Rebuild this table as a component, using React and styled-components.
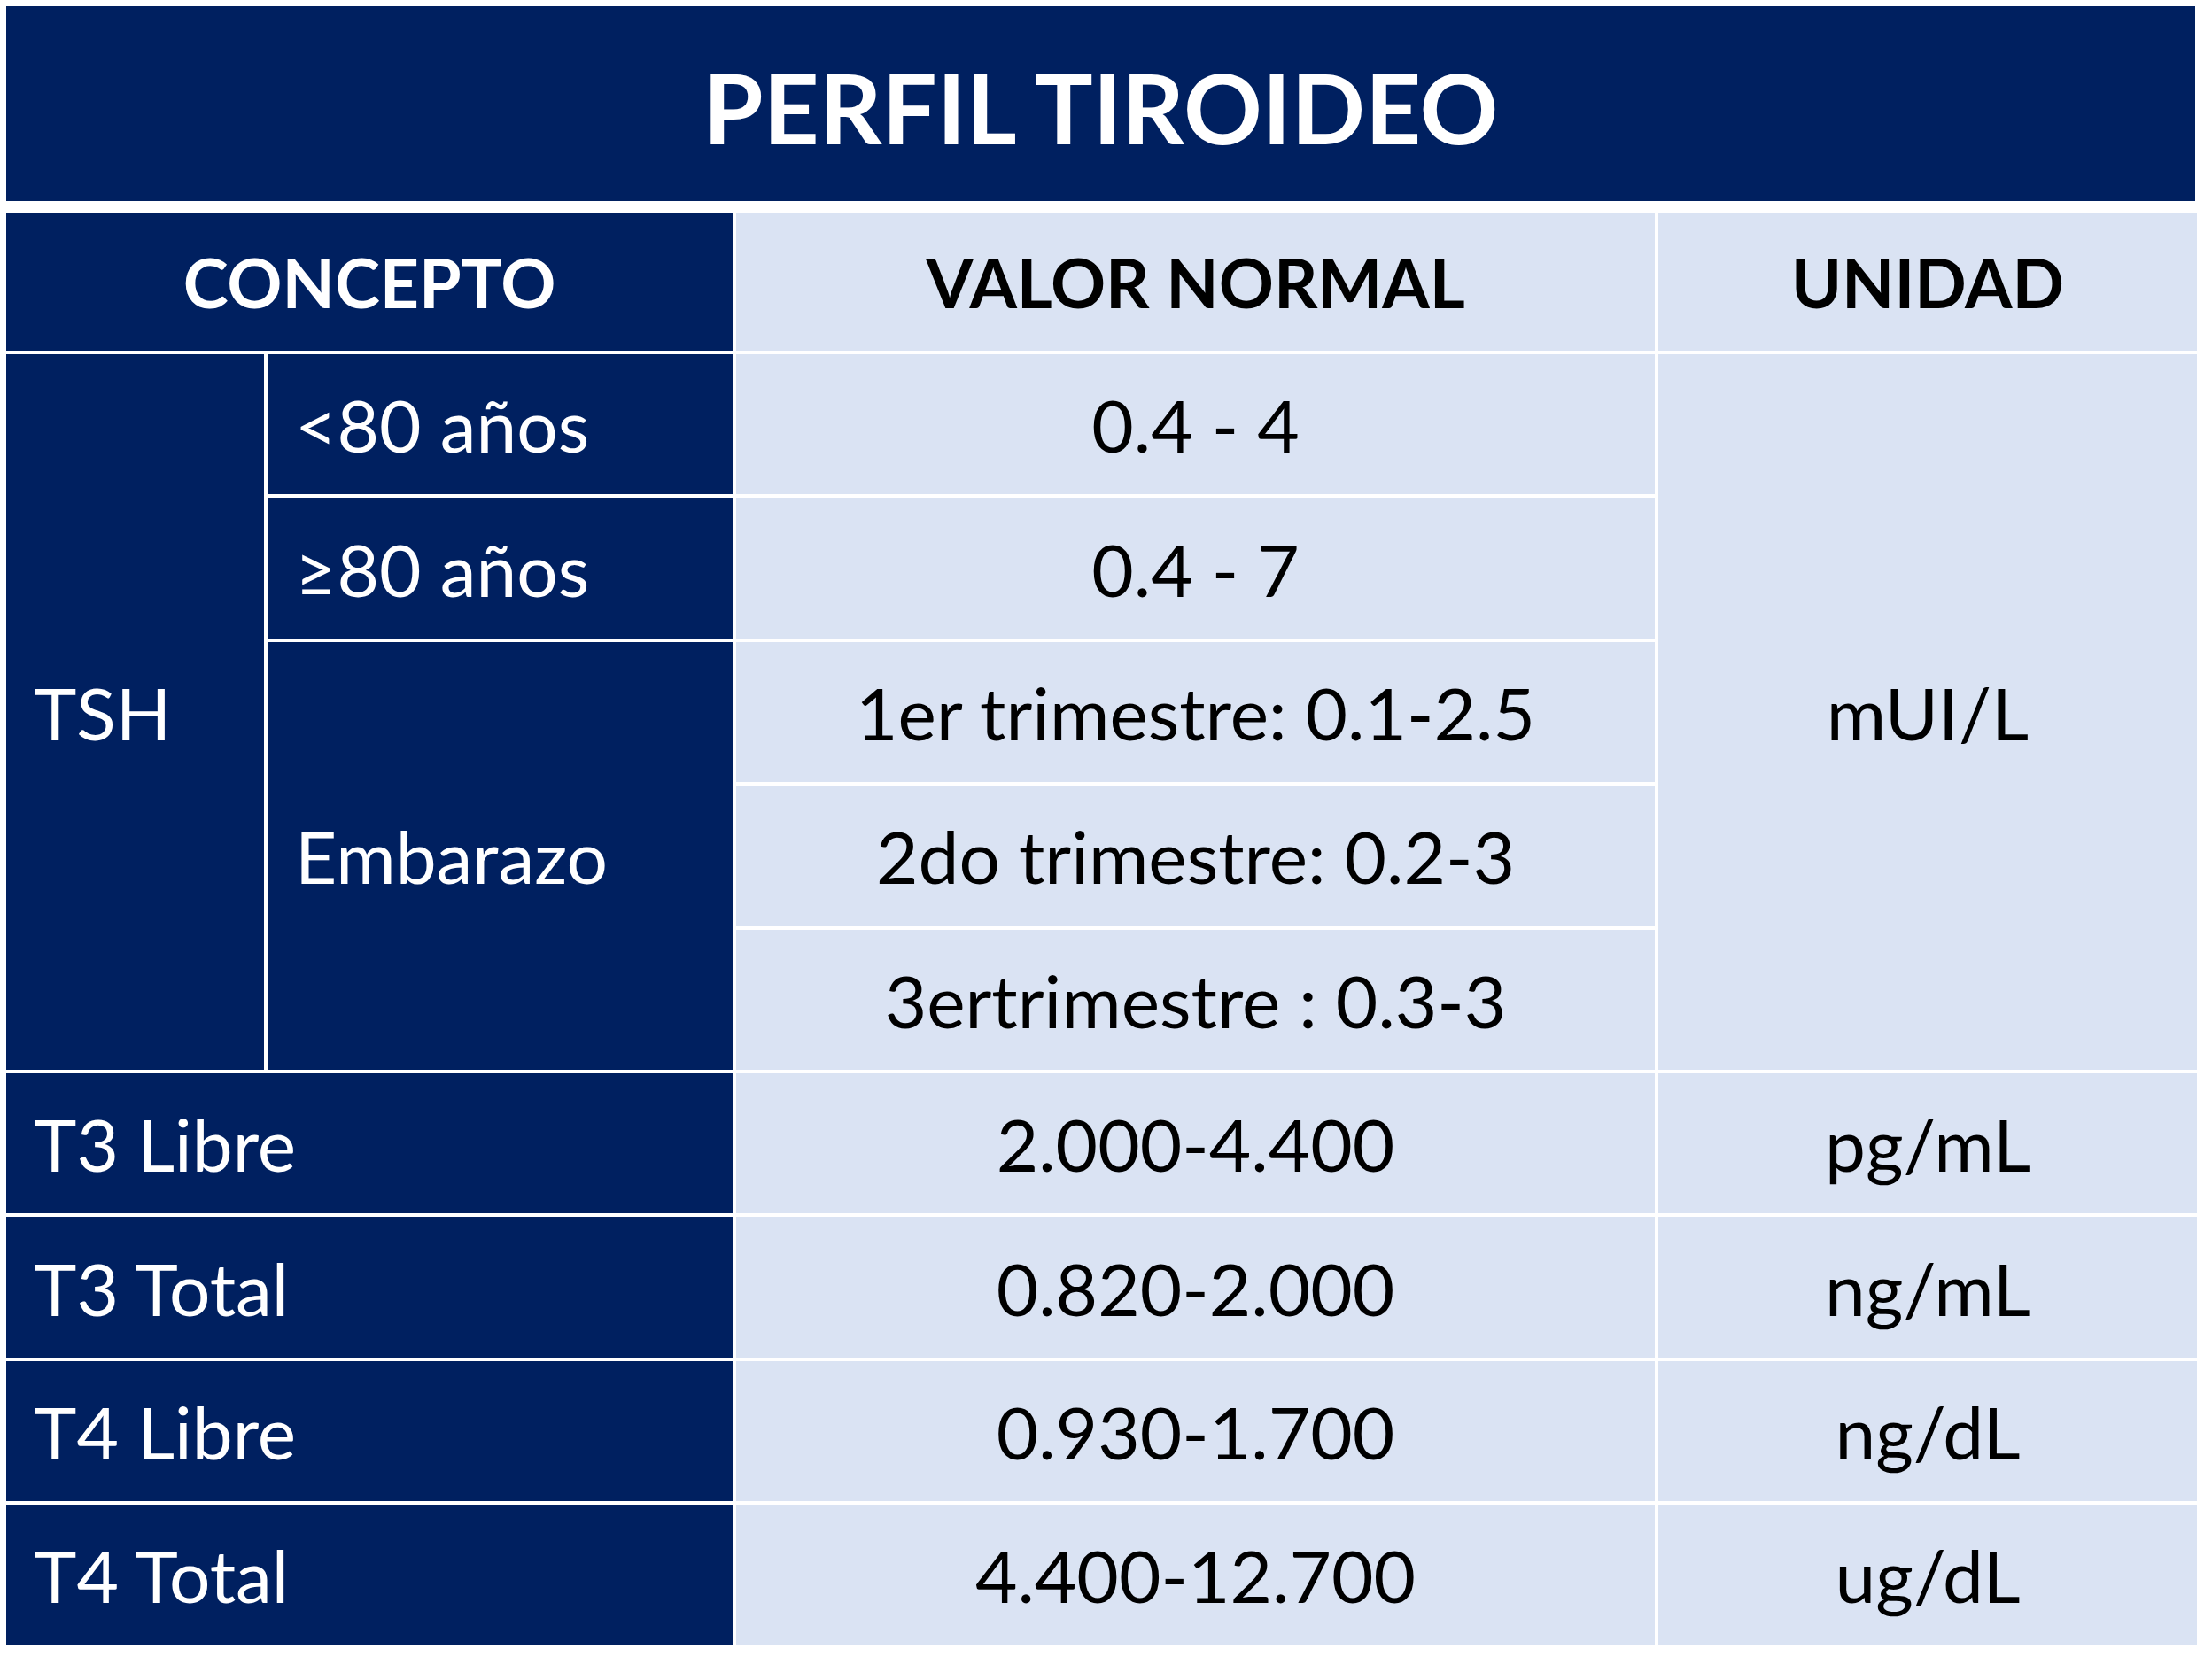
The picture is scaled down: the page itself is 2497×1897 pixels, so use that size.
import { Fragment } from "react";
import styled, { createGlobalStyle } from "styled-components";

const GlobalStyle = createGlobalStyle`
  html, body {
    margin: 0;
    padding: 0;
    background: #ffffff;
  }
  body {
    font-family: Lato, "Open Sans", "Liberation Sans", sans-serif;
  }
`;

const Page = styled.div`
  width: 2497px;
  height: 1897px;
  padding: 7px 19px 0 7px;
  box-sizing: border-box;
  background: #ffffff;
`;

const TitleBar = styled.div`
  height: 220px;
  background: #002060;
  display: flex;
  align-items: center;
  justify-content: center;
  margin-bottom: 13px;
`;

const Title = styled.h1`
  margin: 0;
  color: #ffffff;
  font-size: 110px;
  font-weight: 700;
  padding-top: 6px;
`;

const Table = styled.div`
  display: grid;
  grid-template-columns: 291px 525px 1037px 608px;
  grid-template-rows: 156px repeat(9, 158.4px);
  gap: 4px;
  background: #ffffff;
`;

const Cell = styled.div`
  background: ${(p) => (p.$dark ? "#002060" : "#dae3f3")};
  color: ${(p) => (p.$dark ? "#ffffff" : "#000000")};
  display: flex;
  align-items: center;
  justify-content: ${(p) => (p.$left ? "flex-start" : "center")};
  padding-left: ${(p) => (p.$left ? "31px" : "0")};
  font-size: ${(p) => (p.$head ? "77px" : "82px")};
  font-weight: ${(p) => (p.$head ? 700 : 400)};
  grid-column: ${(p) => p.$col || "auto"};
  grid-row: ${(p) => p.$row || "auto"};
  white-space: nowrap;
`;

const singles = [
  { name: "T3 Libre", value: "2.000-4.400", unit: "pg/mL" },
  { name: "T3 Total", value: "0.820-2.000", unit: "ng/mL" },
  { name: "T4 Libre", value: "0.930-1.700", unit: "ng/dL" },
  { name: "T4 Total", value: "4.400-12.700", unit: "ug/dL" },
];

const App = () => {
  return (
    <Page>
      <GlobalStyle />
      <TitleBar>
        <Title>PERFIL TIROIDEO</Title>
      </TitleBar>
      <Table>
        <Cell $dark $head $col="1 / 3" $row="1">CONCEPTO</Cell>
        <Cell $head $col="3" $row="1">VALOR NORMAL</Cell>
        <Cell $head $col="4" $row="1">UNIDAD</Cell>

        <Cell $dark $left $col="1" $row="2 / 7">TSH</Cell>
        <Cell $dark $left $col="2" $row="2">&lt;80 años</Cell>
        <Cell $col="3" $row="2">0.4 - 4</Cell>
        <Cell $col="4" $row="2 / 7">mUI/L</Cell>
        <Cell $dark $left $col="2" $row="3">≥80 años</Cell>
        <Cell $col="3" $row="3">0.4 - 7</Cell>
        <Cell $dark $left $col="2" $row="4 / 7">Embarazo</Cell>
        <Cell $col="3" $row="4">1er trimestre: 0.1-2.5</Cell>
        <Cell $col="3" $row="5">2do trimestre: 0.2-3</Cell>
        <Cell $col="3" $row="6">3ertrimestre : 0.3-3</Cell>

        {singles.map((s, i) => (
          <Fragment key={s.name}>
            <Cell $dark $left $col="1 / 3" $row={`${7 + i}`}>
              {s.name}
            </Cell>
            <Cell $col="3" $row={`${7 + i}`}>{s.value}</Cell>
            <Cell $col="4" $row={`${7 + i}`}>{s.unit}</Cell>
          </Fragment>
        ))}
      </Table>
    </Page>
  );
};

export default App;
